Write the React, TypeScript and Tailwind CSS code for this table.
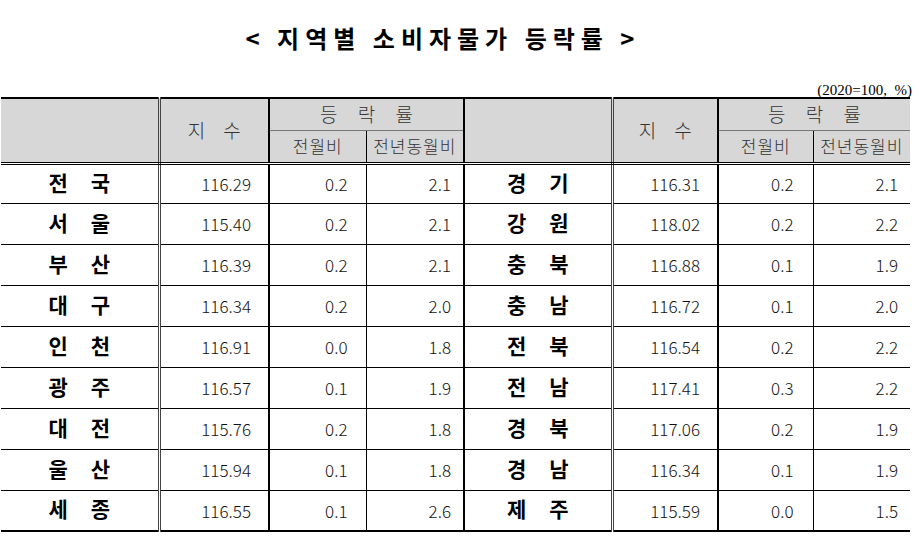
import React from 'react';

type Row = [string, string, string, string, string];

// 왼쪽 / 오른쪽 지역 묶음
const left: Row[] = [
  ['전', '국', '116.29', '0.2', '2.1'],
  ['서', '울', '115.40', '0.2', '2.1'],
  ['부', '산', '116.39', '0.2', '2.1'],
  ['대', '구', '116.34', '0.2', '2.0'],
  ['인', '천', '116.91', '0.0', '1.8'],
  ['광', '주', '116.57', '0.1', '1.9'],
  ['대', '전', '115.76', '0.2', '1.8'],
  ['울', '산', '115.94', '0.1', '1.8'],
  ['세', '종', '116.55', '0.1', '2.6'],
];

const right: Row[] = [
  ['경', '기', '116.31', '0.2', '2.1'],
  ['강', '원', '118.02', '0.2', '2.2'],
  ['충', '북', '116.88', '0.1', '1.9'],
  ['충', '남', '116.72', '0.1', '2.0'],
  ['전', '북', '116.54', '0.2', '2.2'],
  ['전', '남', '117.41', '0.3', '2.2'],
  ['경', '북', '117.06', '0.2', '1.9'],
  ['경', '남', '116.34', '0.1', '1.9'],
  ['제', '주', '115.59', '0.0', '1.5'],
];

const kr = { fontFamily: '"Noto Sans CJK KR", "Noto Sans", sans-serif' };

const Region: React.FC<{ a: string; b: string }> = ({ a, b }) => (
  <span className="inline-flex gap-[23px] text-[21px] font-bold text-black leading-none">
    <span>{a}</span>
    <span>{b}</span>
  </span>
);

export default function App() {
  const th = 'bg-[#d7d7d7] font-light text-[#333] p-0 align-middle';
  const hdrBottom = 'border-b-[3px] [border-bottom-style:double] border-b-black';
  const dbl = 'border-r-[3px] [border-right-style:double] border-r-[#444]';
  const thick = 'border-r-2 border-r-black';
  const thin = 'border-r border-r-black';

  return (
    <div className="w-[920px] h-[544px] bg-white overflow-hidden" style={kr}>
      <div className="pt-[25px] pr-[34px] h-[51px] leading-[26px] text-center text-[24px] font-bold tracking-[6px] text-black">
        &lt; 지역별 소비자물가 등락률 &gt;
      </div>
      <div
        className="h-[46px] flex items-end justify-end pr-[8px] text-[15px] leading-[13px] text-black whitespace-pre"
        style={{ fontFamily: '"Liberation Serif", "Times New Roman", serif' }}
      >
        (2020=100,  %)
      </div>
      <table className="ml-px w-[909px] table-fixed border-collapse">
        <colgroup>
          <col className="w-[158px]" />
          <col className="w-[110px]" />
          <col className="w-[97px]" />
          <col className="w-[98px]" />
          <col className="w-[148px]" />
          <col className="w-[106px]" />
          <col className="w-[95px]" />
          <col className="w-[97px]" />
        </colgroup>
        <thead>
          <tr className="h-[32px]">
            <th rowSpan={2} className={`${th} border-t-2 border-t-black ${hdrBottom} ${dbl}`} />
            <th rowSpan={2} className={`${th} border-t-2 border-t-black ${hdrBottom} ${thick} text-[19px] tracking-[7px] pl-[7px]`}>
              지 수
            </th>
            <th colSpan={2} className={`${th} border-t-2 border-t-black border-b border-b-[#777] ${thick} text-[19px] tracking-[8px] pl-[8px]`}>
              등 락 률
            </th>
            <th rowSpan={2} className={`${th} border-t-2 border-t-black ${hdrBottom} ${dbl}`} />
            <th rowSpan={2} className={`${th} border-t-2 border-t-black ${hdrBottom} ${thick} text-[19px] tracking-[7px] pl-[7px]`}>
              지 수
            </th>
            <th colSpan={2} className={`${th} border-t-2 border-t-black border-b border-b-[#777] text-[19px] tracking-[8px] pl-[8px]`}>
              등 락 률
            </th>
          </tr>
          <tr className="h-[33px]">
            <th className={`${th} ${hdrBottom} ${thin} text-[17px] tracking-[1px]`}>전월비</th>
            <th className={`${th} ${hdrBottom} ${thick} text-[17px] tracking-[1px]`}>전년동월비</th>
            <th className={`${th} ${hdrBottom} ${thin} text-[17px] tracking-[1px]`}>전월비</th>
            <th className={`${th} ${hdrBottom} text-[17px] tracking-[1px]`}>전년동월비</th>
          </tr>
        </thead>
        <tbody>
          {left.map((l, i) => {
            const r = right[i];
            const last = i === left.length - 1;
            const rb = last ? 'border-b-2 border-b-black' : 'border-b border-b-black';
            const num = `p-0 text-right text-[17px] font-light text-[#111] ${rb}`;
            return (
              <tr key={i} className={i === 0 ? 'h-[40px]' : 'h-[41px]'}>
                <td className={`p-0 text-center ${rb} ${dbl}`}>
                  <Region a={l[0]} b={l[1]} />
                </td>
                <td className={`${num} pr-[17px] ${thick}`}>{l[2]}</td>
                <td className={`${num} pr-[18px] ${thin}`}>{l[3]}</td>
                <td className={`${num} pr-[12px] ${thick}`}>{l[4]}</td>
                <td className={`p-0 text-center ${rb} ${dbl}`}>
                  <Region a={r[0]} b={r[1]} />
                </td>
                <td className={`${num} pr-[17px] ${thick}`}>{r[2]}</td>
                <td className={`${num} pr-[19px] ${thin}`}>{r[3]}</td>
                <td className={`${num} pr-[12px]`}>{r[4]}</td>
              </tr>
            );
          })}
        </tbody>
      </table>
    </div>
  );
}
